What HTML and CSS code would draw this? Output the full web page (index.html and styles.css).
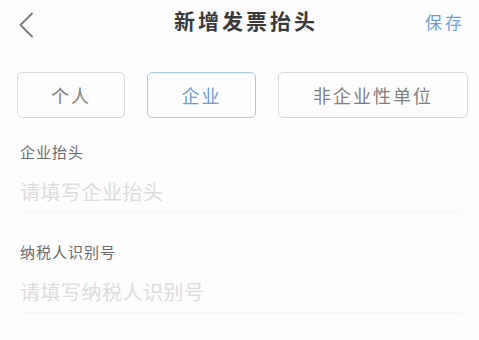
FILE: index.html
```html
<!DOCTYPE html>
<html lang="zh">
<head>
<meta charset="utf-8">
<link rel="stylesheet" href="styles.css">
</head>
<body>
<div class="page">
  <header class="nav">
    <div class="back">
      <svg width="16" height="26" viewBox="0 0 16 26"><path d="M14 1.5 L2.5 13 L14 24.5" fill="none" stroke="#7a7a7a" stroke-width="1.8" stroke-linecap="round" stroke-linejoin="round"/></svg>
    </div>
    <h1 class="title">新增发票抬头</h1>
    <div class="save">保存</div>
  </header>
  <div class="seg">
    <div class="seg-btn w1">个人</div>
    <div class="seg-btn w2 active">企业</div>
    <div class="seg-btn w3">非企业性单位</div>
  </div>
  <div class="field">
    <div class="label">企业抬头</div>
    <div class="input">请填写企业抬头</div>
  </div>
  <div class="field">
    <div class="label">纳税人识别号</div>
    <div class="input">请填写纳税人识别号</div>
  </div>
  <div class="field">
    <div class="label">注册地址</div>
    <div class="input">请填写注册地址</div>
  </div>
</div>
</body>
</html>
```
FILE: styles.css
```css
html, body {
  margin: 0;
  padding: 0;
  background: #fdfdfd;
  font-family: "Noto Sans CJK SC", "Noto Sans", sans-serif;
}
.page {
  width: 479px;
  height: 340px;
  overflow: hidden;
}
.nav {
  height: 46px;
  display: grid;
  grid-template-columns: 1fr auto 1fr;
  align-items: center;
  padding: 0 17px 0 18px;
}
.back {
  display: flex;
  align-items: center;
  height: 26px;
  margin-top: 3px;
}
.title {
  margin: 0 0 6px 12px;
  font-size: 21px;
  font-weight: 700;
  letter-spacing: 3px;
  color: #3a3a3a;
  line-height: 28px;
}
.save {
  justify-self: end;
  font-size: 17px;
  letter-spacing: 3px;
  color: #6ea2d4;
  margin: 0 -3px 4px 0;
}
.seg {
  display: flex;
  gap: 22px;
  padding: 26px 9px 0 17px;
}
.seg-btn {
  height: 44px;
  box-sizing: content-box;
  border: 1.5px solid #d9d9d9;
  border-radius: 5px;
  display: flex;
  align-items: center;
  justify-content: center;
  font-size: 18px;
  letter-spacing: 2px;
  color: #808080;
}
.w1 { width: 106px; }
.w2 { width: 107px; }
.w3 { width: 188px; }
.seg-btn.active {
  border-color: #a9cbea;
  color: #6b9fd3;
}
.field {
  margin: 0 17px 0 20px;
  padding-top: 24px;
  border-bottom: 1px solid #f5f5f5;
  padding-bottom: 6px;
}
.field + .field {
  padding-top: 29px;
}
.label {
  font-size: 15px;
  line-height: 20px;
  letter-spacing: 1px;
  color: #6a6a6a;
}
.input {
  margin-top: 16px;
  font-size: 20px;
  line-height: 28px;
  letter-spacing: 0.5px;
  color: #dcdcdc;
}
```
